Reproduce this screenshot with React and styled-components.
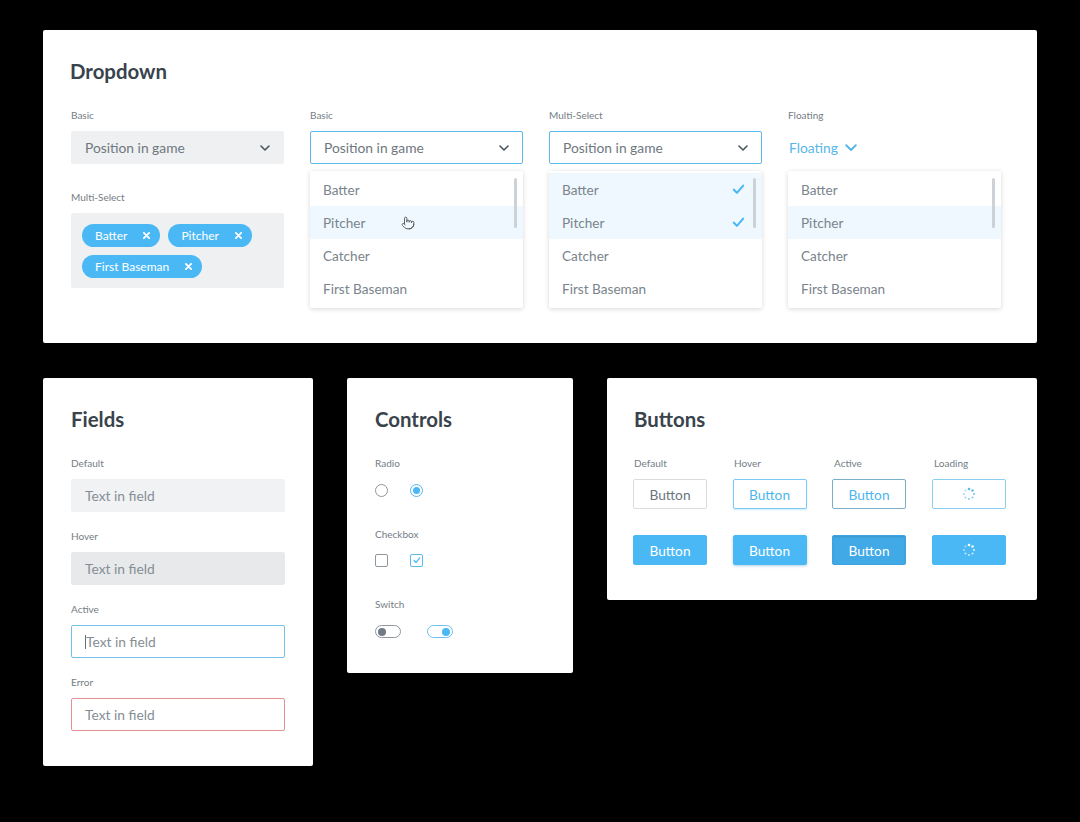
import React from "react";
import styled, { createGlobalStyle } from "styled-components";
import { Pointer } from "lucide-react";

const BLUE = "#4bb8f6";

const Global = createGlobalStyle`
  html, body {
    margin: 0;
    padding: 0;
    background: #000;
  }
  body {
    font-family: Lato, "Open Sans", sans-serif;
    -webkit-font-smoothing: antialiased;
  }
`;

const Page = styled.div`
  width: 1080px;
  height: 822px;
  box-sizing: border-box;
  padding: 30px 43px 0 43px;
  display: flex;
  flex-direction: column;
  gap: 35px;
`;

const Card = styled.div`
  background: #fff;
  border-radius: 2px;
  box-sizing: border-box;
  width: ${(p) => p.$w}px;
  padding: 29px 28px 35px ${(p) => p.$pl || 28}px;
  align-self: flex-start;
`;

const Title = styled.h2`
  margin: 0 0 25px 0;
  font-size: 20.4px;
  line-height: 24px;
  font-weight: 700;
  color: #38434c;
`;

const Label = styled.div`
  font-size: 10px;
  line-height: 14px;
  color: #747d85;
  margin-top: ${(p) => p.$mt || 0}px;
  margin-bottom: ${(p) => p.$mb ?? 9}px;
`;

const DropGrid = styled.div`
  display: grid;
  grid-template-columns: repeat(4, 213px);
  column-gap: 26px;
  margin-left: 1px;
`;

const Col = styled.div`
  display: flex;
  flex-direction: column;
`;

const Select = styled.div`
  height: 33px;
  box-sizing: border-box;
  display: flex;
  align-items: center;
  justify-content: space-between;
  padding: 0 13px 0 13px;
  font-size: 13.8px;
  color: #6e7880;
  background: ${(p) => (p.$open ? "#fff" : "#eef0f2")};
  border: 1px solid ${(p) => (p.$open ? "#5cb9e8" : "#eef0f2")};
  border-radius: 2px;
`;

const FloatTrigger = styled.div`
  height: 33px;
  display: flex;
  align-items: center;
  gap: 7px;
  padding-left: 1px;
  font-size: 13.8px;
  color: #55b7ea;
`;

const MultiBox = styled.div`
  background: #eef0f2;
  border-radius: 2px;
  padding: 11px 11px 10px 11px;
  display: flex;
  flex-wrap: wrap;
  gap: 8px;
  height: 75px;
  box-sizing: border-box;
  align-content: flex-start;
`;

const Chip = styled.div`
  height: 23px;
  box-sizing: border-box;
  border-radius: 12px;
  background: ${BLUE};
  color: #fff;
  font-size: 12px;
  display: flex;
  align-items: center;
  gap: 16px;
  padding: 0 10px 0 13px;
`;

const List = styled.div`
  position: relative;
  margin-top: 7px;
  height: 137px;
  box-sizing: border-box;
  padding: 2px 0 3px 0;
  background: #fff;
  border-radius: 2px;
  box-shadow: 0 1px 5px rgba(0, 0, 0, 0.16);
`;

const Item = styled.div`
  height: 33px;
  display: flex;
  align-items: center;
  justify-content: space-between;
  padding: 0 17px 0 13px;
  font-size: 13.6px;
  color: #7a848c;
  background: ${(p) => (p.$hl ? "#eef8fe" : "transparent")};
`;

const ItemText = styled.span`
  display: flex;
  align-items: center;
  gap: 36px;
`;

const Scroll = styled.div`
  position: absolute;
  right: 6px;
  top: 7px;
  width: 3px;
  height: 50px;
  border-radius: 2px;
  background: #cdd2d6;
`;

const Row = styled.div`
  display: flex;
  gap: 34px;
  align-items: flex-start;
`;

const Field = styled.div`
  height: 33px;
  box-sizing: border-box;
  display: flex;
  align-items: center;
  padding-left: 13px;
  font-size: 13.8px;
  color: #858e95;
  border-radius: 2px;
  background: ${(p) => p.$bg || "#f1f2f4"};
  border: 1px solid ${(p) => p.$border || p.$bg || "#f1f2f4"};
`;

const Caret = styled.span`
  display: inline-block;
  width: 1px;
  height: 14px;
  background: #66727b;
`;

const Controls = styled.div`
  display: flex;
  gap: ${(p) => p.$gap || 22}px;
  align-items: center;
  height: 13px;
  margin-bottom: ${(p) => p.$mb || 0}px;
`;

const Radio = styled.div`
  width: 13px;
  height: 13px;
  box-sizing: border-box;
  border-radius: 50%;
  border: 1px solid ${(p) => (p.$on ? "#5ab8ea" : "#8e969c")};
  display: flex;
  align-items: center;
  justify-content: center;
  &::after {
    content: "";
    display: ${(p) => (p.$on ? "block" : "none")};
    width: 7px;
    height: 7px;
    border-radius: 50%;
    background: ${BLUE};
  }
`;

const Check = styled.div`
  width: 13px;
  height: 13px;
  box-sizing: border-box;
  border-radius: 2px;
  border: 1px solid ${(p) => (p.$on ? "#5ab8ea" : "#8e969c")};
  display: flex;
  align-items: center;
  justify-content: center;
`;

const Switch = styled.div`
  width: 26px;
  height: 13px;
  box-sizing: border-box;
  border-radius: 7px;
  border: 1px solid ${(p) => (p.$on ? "#6cc0ea" : "#8e969c")};
  display: flex;
  align-items: center;
  justify-content: ${(p) => (p.$on ? "flex-end" : "flex-start")};
  padding: 0 2px;
  &::after {
    content: "";
    width: 8px;
    height: 8px;
    border-radius: 50%;
    background: ${(p) => (p.$on ? BLUE : "#707b85")};
  }
`;

const BtnLabels = styled.div`
  display: grid;
  grid-template-columns: repeat(4, 74px);
  column-gap: 26px;
  margin-bottom: 9px;
`;

const BtnLabel = styled.div`
  font-size: 10px;
  line-height: 14px;
  color: #747d85;
`;

const BtnGrid = styled.div`
  display: grid;
  grid-template-columns: repeat(4, 74px);
  column-gap: 25.5px;
  row-gap: 26px;
  margin-left: -1px;
`;

const variants = {
  default: { bg: "#fff", border: "#d9dde0", color: "#6b757d" },
  hover: { bg: "#fff", border: "#7ccaf1", color: "#4db6ee", shadow: "0 1px 2px rgba(77,184,246,0.3)" },
  active: { bg: "#fff", border: "#7aaec8", color: "#4db6ee" },
  loading: { bg: "#fff", border: "#88cff2", color: "#4db6ee" },
  fill: { bg: BLUE, border: BLUE, color: "#fff" },
  fillHover: { bg: BLUE, border: BLUE, color: "#fff", shadow: "0 1px 3px rgba(30,120,180,0.35)" },
  fillActive: { bg: "#40a9e6", border: "#3ca4e0", color: "#fff", shadow: "inset 0 1px 2px rgba(0,0,0,0.12)" },
};

const Button = styled.div`
  height: 30px;
  box-sizing: border-box;
  border-radius: 2px;
  display: flex;
  align-items: center;
  justify-content: center;
  font-size: 13.7px;
  background: ${(p) => variants[p.$v].bg};
  border: 1px solid ${(p) => variants[p.$v].border};
  color: ${(p) => variants[p.$v].color};
  box-shadow: ${(p) => variants[p.$v].shadow || "none"};
`;

const Chevron = ({ color = "#4b555d", w = 10 }) => (
  <svg width={w} height={w * 0.6} viewBox="0 0 10 6" fill="none">
    <polyline points="1,1 5,5 9,1" stroke={color} strokeWidth="1.6" strokeLinecap="round" strokeLinejoin="round" />
  </svg>
);

const XIcon = () => (
  <svg width="7" height="7" viewBox="0 0 8 8">
    <path d="M1 1 L7 7 M7 1 L1 7" stroke="#fff" strokeWidth="2" strokeLinecap="round" />
  </svg>
);

const Tick = ({ size = 12, sw = 2 }) => (
  <svg width={size} height={size * 0.8} viewBox="0 0 12 10" fill="none">
    <path d="M1.5 5.5 L4.5 8.5 L10.5 1.5" stroke={BLUE} strokeWidth={sw} strokeLinecap="round" strokeLinejoin="round" />
  </svg>
);

const Spinner = ({ color }) => (
  <svg width="14" height="14" viewBox="0 0 14 14">
    {Array.from({ length: 8 }).map((_, i) => {
      const a = (i / 8) * Math.PI * 2 - Math.PI / 2;
      return (
        <circle
          key={i}
          cx={7 + Math.cos(a) * 5}
          cy={7 + Math.sin(a) * 5}
          r={i < 2 ? 1.3 : 1}
          fill={color}
          opacity={1 - i * 0.07}
        />
      );
    })}
  </svg>
);

const options = ["Batter", "Pitcher", "Catcher", "First Baseman"];

const DropList = ({ hl = [], checks = false, cursor = false }) => (
  <List>
    {options.map((o) => (
      <Item key={o} $hl={hl.includes(o)}>
        <ItemText>
          {o}
          {cursor && o === "Pitcher" && <Pointer size={14} color="#555" strokeWidth={1.6} />}
        </ItemText>
        {checks && hl.includes(o) && <Tick size={13} />}
      </Item>
    ))}
    <Scroll />
  </List>
);

export default function App() {
  return (
    <>
      <Global />
      <Page>
        <Card $w={994} $pl={27}>
          <Title>Dropdown</Title>
          <DropGrid>
            <Col>
              <Label>Basic</Label>
              <Select>
                Position in game
                <Chevron />
              </Select>
              <Label $mt={26}>Multi-Select</Label>
              <MultiBox>
                <Chip>
                  Batter
                  <XIcon />
                </Chip>
                <Chip>
                  Pitcher
                  <XIcon />
                </Chip>
                <Chip>
                  First Baseman
                  <XIcon />
                </Chip>
              </MultiBox>
            </Col>
            <Col>
              <Label>Basic</Label>
              <Select $open>
                Position in game
                <Chevron />
              </Select>
              <DropList hl={["Pitcher"]} cursor />
            </Col>
            <Col>
              <Label>Multi-Select</Label>
              <Select $open>
                Position in game
                <Chevron />
              </Select>
              <DropList hl={["Batter", "Pitcher"]} checks />
            </Col>
            <Col>
              <Label>Floating</Label>
              <FloatTrigger>
                Floating
                <Chevron color="#55b7ea" w={12} />
              </FloatTrigger>
              <DropList hl={["Pitcher"]} />
            </Col>
          </DropGrid>
        </Card>

        <Row>
          <Card $w={270}>
            <Title>Fields</Title>
            <Label>Default</Label>
            <Field>Text in field</Field>
            <Label $mt={17}>Hover</Label>
            <Field $bg="#e7e9eb">Text in field</Field>
            <Label $mt={17}>Active</Label>
            <Field $bg="#fff" $border="#73c1e8">
              <Caret />
              Text in field
            </Field>
            <Label $mt={17}>Error</Label>
            <Field $bg="#fff" $border="#e58f95">
              Text in field
            </Field>
          </Card>

          <Card $w={226}>
            <Title>Controls</Title>
            <Label $mb={14}>Radio</Label>
            <Controls $mb={30}>
              <Radio />
              <Radio $on />
            </Controls>
            <Label $mb={13}>Checkbox</Label>
            <Controls $mb={30}>
              <Check />
              <Check $on>
                <Tick size={8} sw={2} />
              </Check>
            </Controls>
            <Label $mb={14}>Switch</Label>
            <Controls $gap={26}>
              <Switch />
              <Switch $on />
            </Controls>
          </Card>

          <Card $w={430} $pl={27}>
            <Title>Buttons</Title>
            <BtnLabels>
              <BtnLabel>Default</BtnLabel>
              <BtnLabel>Hover</BtnLabel>
              <BtnLabel>Active</BtnLabel>
              <BtnLabel>Loading</BtnLabel>
            </BtnLabels>
            <BtnGrid>
              <Button $v="default">Button</Button>
              <Button $v="hover">Button</Button>
              <Button $v="active">Button</Button>
              <Button $v="loading">
                <Spinner color="#5cbaea" />
              </Button>
              <Button $v="fill">Button</Button>
              <Button $v="fillHover">Button</Button>
              <Button $v="fillActive">Button</Button>
              <Button $v="fill">
                <Spinner color="#fff" />
              </Button>
            </BtnGrid>
          </Card>
        </Row>
      </Page>
    </>
  );
}
